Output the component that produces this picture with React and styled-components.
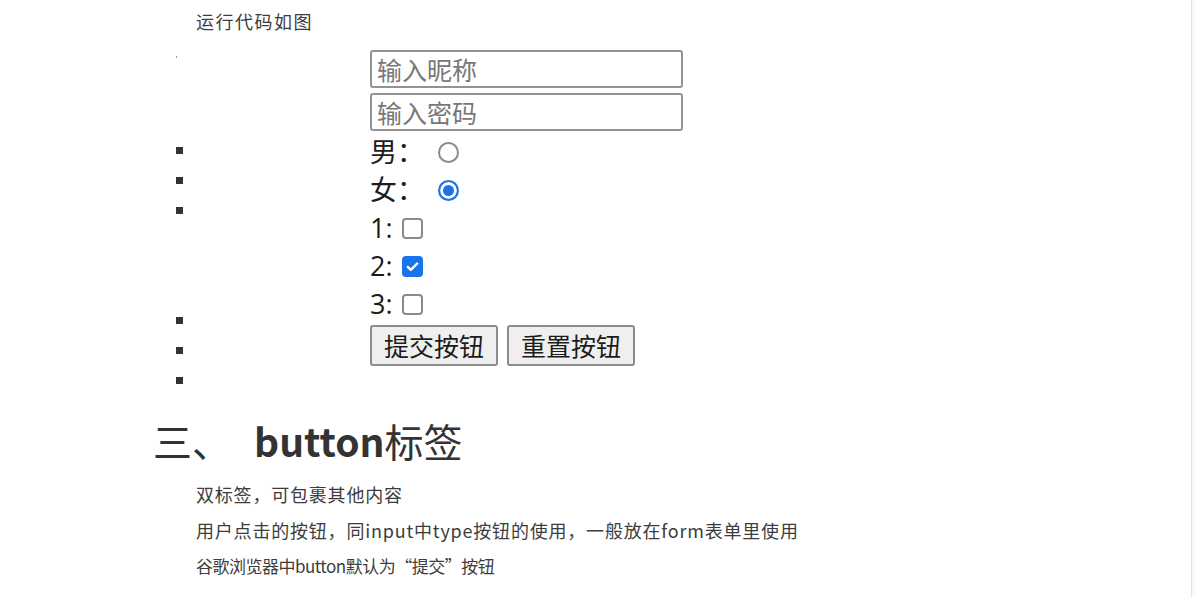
import React from 'react';
import styled, { createGlobalStyle } from 'styled-components';

const GlobalStyle = createGlobalStyle`
  body {
    margin: 0;
    background: #fff;
    font-family: "Noto Sans CJK SC", "Noto Sans", sans-serif;
  }
`;

const Page = styled.div`
  display: flex;
  min-height: 597px;
`;

const Article = styled.div`
  width: 1191px;
  border-right: 1px solid #e2e2e2;
  background: #fff;
`;

const Gutter = styled.div`
  flex: 1;
  background: #f9f9f9;
`;

const Lead = styled.p`
  margin: 0;
  padding: 8px 0 0 196px;
  font-size: 18px;
  line-height: 26px;
  letter-spacing: 1.5px;
  color: #3d3d3d;
`;

const Figure = styled.div`
  display: flex;
  margin-top: 16px;
  padding-left: 176px;
`;

const BulletCol = styled.div`
  display: flex;
  flex-direction: column;
  width: 194px;
  padding-top: 6px;
`;

const Dot = styled.span`
  width: 1px;
  height: 2px;
  background: #9a9a9a;
`;

const Bullet = styled.span`
  width: 7px;
  height: 7px;
  margin-top: ${p => p.$gap}px;
  background: #333;
`;

const Shot = styled.div`
  display: flex;
  flex-direction: column;
  align-items: flex-start;
  font-family: "Open Sans", "Noto Sans CJK SC", sans-serif;
  color: #1c1c1c;
`;

const Field = styled.input`
  box-sizing: border-box;
  width: 313px;
  height: 38px;
  margin-bottom: ${p => p.$after}px;
  padding: 0 5px;
  border: 2px solid #939393;
  border-radius: 3px;
  font-family: "Noto Sans CJK SC", sans-serif;
  font-size: 25px;
  outline: none;
  &::placeholder {
    color: #777;
  }
`;

const Row = styled.div`
  display: flex;
  align-items: center;
  height: 38px;
`;

const Label = styled.span`
  font-size: 27px;
  line-height: 38px;
`;

const Radio = styled.span`
  box-sizing: border-box;
  width: 21px;
  height: 21px;
  margin-left: ${p => p.$left}px;
  border-radius: 50%;
  border: ${p => (p.$on ? '2px solid #1a73e8' : '2px solid #8a8a8a')};
  background: ${p => (p.$on ? '#1a73e8' : '#fff')};
  box-shadow: ${p => (p.$on ? 'inset 0 0 0 3px #fff' : 'none')};
`;

const Check = styled.span`
  box-sizing: border-box;
  display: flex;
  align-items: center;
  justify-content: center;
  width: 21px;
  height: 21px;
  margin-left: 9px;
  border-radius: 4px;
  border: 2px solid ${p => (p.$on ? '#1a73e8' : '#8a8a8a')};
  background: ${p => (p.$on ? '#1a73e8' : '#fff')};
`;

const Buttons = styled.div`
  display: flex;
  gap: 9px;
  margin-top: 2px;
`;

const Btn = styled.button`
  box-sizing: border-box;
  height: 41px;
  padding: 0 12px;
  border: 2px solid #8c8c8c;
  border-radius: 3px;
  background: #efefef;
  font-family: "Noto Sans CJK SC", sans-serif;
  font-size: 25px;
  line-height: 37px;
  color: #1c1c1c;
`;

const Heading = styled.h2`
  margin: 32px 0 0 153px;
  font-size: 39px;
  line-height: 48px;
  font-weight: 400;
  color: #333;
`;

const Num = styled.span`
  display: inline-block;
  margin-right: 23px;
`;

const Bold = styled.b`
  font-weight: 700;
`;

const Para = styled.p`
  margin: ${p => p.$top || 0}px 0 0 196px;
  font-size: ${p => p.$size}px;
  line-height: 36px;
  letter-spacing: ${p => p.$track}px;
  color: #3d3d3d;
`;

const Tick = () => (
  <svg width="15" height="15" viewBox="0 0 16 16">
    <path d="M3 8.5l3.2 3.2L13 4.8" fill="none" stroke="#fff" strokeWidth="2.6" strokeLinecap="round" strokeLinejoin="round" />
  </svg>
);

const App = () => {
  return (
    <>
      <GlobalStyle />
      <Page>
        <Article>
          <Lead>运行代码如图</Lead>
          <Figure>
            <BulletCol>
              <Dot />
              <Bullet $gap={89} />
              <Bullet $gap={23} />
              <Bullet $gap={23} />
              <Bullet $gap={103} />
              <Bullet $gap={23} />
              <Bullet $gap={23} />
            </BulletCol>
            <Shot>
              <Field placeholder="输入昵称" $after={5} />
              <Field placeholder="输入密码" $after={2} />
              <Row>
                <Label>男：</Label>
                <Radio $left={14} />
              </Row>
              <Row>
                <Label>女：</Label>
                <Radio $left={14} $on />
              </Row>
              <Row>
                <Label>1:</Label>
                <Check />
              </Row>
              <Row>
                <Label>2:</Label>
                <Check $on>
                  <Tick />
                </Check>
              </Row>
              <Row>
                <Label>3:</Label>
                <Check />
              </Row>
              <Buttons>
                <Btn>提交按钮</Btn>
                <Btn>重置按钮</Btn>
              </Buttons>
            </Shot>
          </Figure>
          <Heading>
            <Num>三、</Num>
            <Bold>button</Bold>标签
          </Heading>
          <Para $size={18} $track={0.8} $top={12}>双标签，可包裹其他内容</Para>
          <Para $size={18} $track={0.8}>用户点击的按钮，同input中type按钮的使用，一般放在form表单里使用</Para>
          <Para $size={17} $track={-0.5}>谷歌浏览器中button默认为“提交”按钮</Para>
        </Article>
        <Gutter />
      </Page>
    </>
  );
};

export default App;
